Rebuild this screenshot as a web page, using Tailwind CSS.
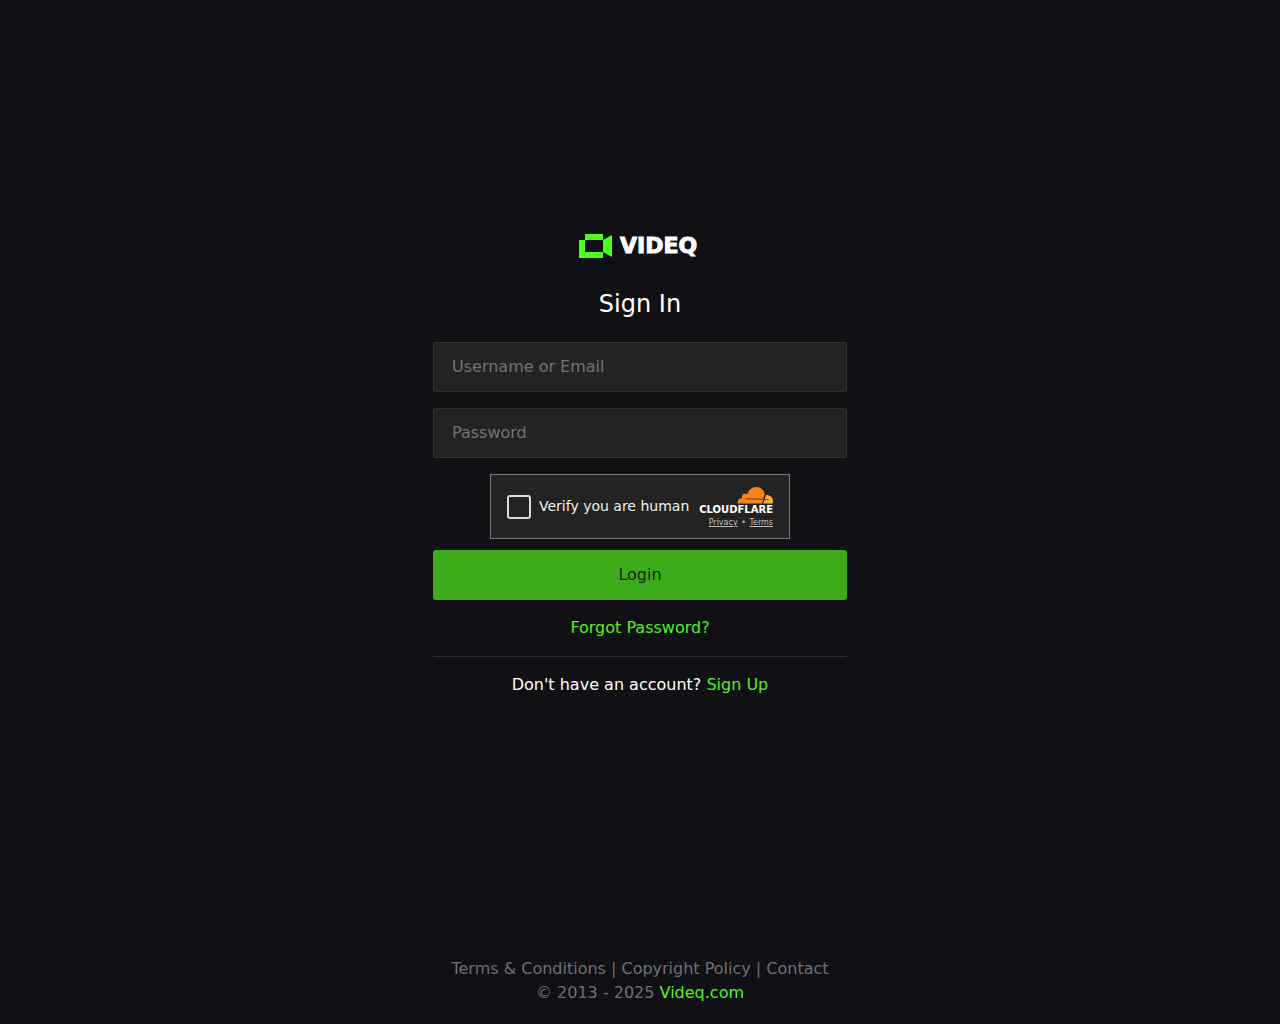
<!DOCTYPE html>
<html lang="en">
<head>
    <meta charset="UTF-8">
    <meta name="viewport" content="width=device-width, initial-scale=1.0">
    <title>Sign In - Videq</title>
    <script src="https://cdn.jsdelivr.net/npm/@tailwindcss/browser@4"></script>
</head>
<body class="bg-[#111115] min-h-screen flex flex-col text-base text-white font-['DejaVu_Sans',sans-serif]">
    <main class="flex-1 flex items-center justify-center px-4 pb-[26px]">
        <div class="w-full max-w-[414px] text-center">
            <!-- Logo -->
            <a href="#" class="flex items-center gap-2 h-6 w-[122px] mx-auto" aria-label="Videq">
                <svg class="w-[33px] h-6 shrink-0" viewBox="0 0 33 24" fill="#4dff1c" aria-hidden="true">
                    <path d="M6 0H24V6H6ZM0 6H6V18H24V24H0ZM24 6L33 1V23L24 18Z"/>
                </svg>
                <span class="font-bold text-[22px] leading-6 [-webkit-text-stroke:1px_#ffffff]">VIDEQ</span>
            </a>

            <h1 class="mt-[30px] mb-[22px] text-2xl">Sign In</h1>

            <form>
                <input type="text" name="username" aria-label="Username or Email" placeholder="Username or Email" class="block w-full h-[50px] px-[18px] pb-0.5 mb-4 rounded-xs border border-[#303032] bg-[#232323] text-white placeholder:text-[#6c757d] focus:outline-none focus:border-[#3dab18]">
                <input type="password" name="password" aria-label="Password" placeholder="Password" class="block w-full h-[50px] px-[18px] pb-0.5 mb-4 rounded-xs border border-[#303032] bg-[#232323] text-white placeholder:text-[#6c757d] focus:outline-none focus:border-[#3dab18]">

                <!-- Human check -->
                <div class="flex items-center justify-between w-[300px] h-[65px] mx-auto mb-[11px] px-4 border border-[#797979] bg-[#232323]">
                    <div class="flex items-center gap-2">
                        <input id="human" type="checkbox" class="appearance-none size-6 rounded-[3px] border-2 border-[#dadada] bg-[#232323] checked:bg-[#3dab18]">
                        <label for="human" class="pb-0.5 text-sm text-[#f0f0f0] whitespace-nowrap">Verify you are human</label>
                    </div>
                    <div class="flex flex-col items-end pt-[3px]">
                        <svg class="w-9 h-[17px]" viewBox="0 0 36 17" aria-hidden="true">
                            <path fill="#f6821f" d="M.6 16.5C.3 13.5 2 11.2 5 11C4.2 7.8 7.6 5.4 10.3 7.2C11.8 3 15 0 19 0C23.5 0 27 3 27.8 7.2L25.3 16.5Z"/>
                            <path fill="#fbad41" d="M26.2 16.5L28.8 8.2C32.8 7.6 36 10.6 36 14.5C36 15.2 35.9 16 35.7 16.5Z"/>
                            <path fill="none" stroke="#232323" stroke-width=".7" d="M9 11.8L24 12.2C26 12.2 26.8 11.3 27.8 8"/>
                            <path fill="none" stroke="#232323" stroke-width=".7" d="M25.5 16.5L27 12.8L31.5 12.4"/>
                        </svg>
                        <span class="font-bold text-[10px] leading-3">CLOUDFLARE</span>
                        <div class="mt-px text-[8px] leading-3 text-[#bfbfbf]">
                            <a href="#" class="underline">Privacy</a> <span class="px-px">•</span> <a href="#" class="underline">Terms</a>
                        </div>
                    </div>
                </div>

                <button type="submit" class="block w-full h-[50px] rounded-[3px] bg-[#3dab18] text-[#17231a]">Login</button>
            </form>

            <a href="#" class="inline-block mt-4 align-top text-[#57ee29]">Forgot Password?</a>
            <hr class="my-4 border-[#303032]">
            <p>Don't have an account? <a href="#" class="text-[#57ee29]">Sign Up</a></p>
        </div>
    </main>

    <footer class="px-4 pb-[19px] text-center text-[#6c6f75]">
        <p><a href="#">Terms &amp; Conditions</a> | <a href="#">Copyright Policy</a> | <a href="#">Contact</a></p>
        <p>© 2013 - 2025 <a href="#" class="text-[#57ee29]">Videq.com</a></p>
    </footer>
</body>
</html>
